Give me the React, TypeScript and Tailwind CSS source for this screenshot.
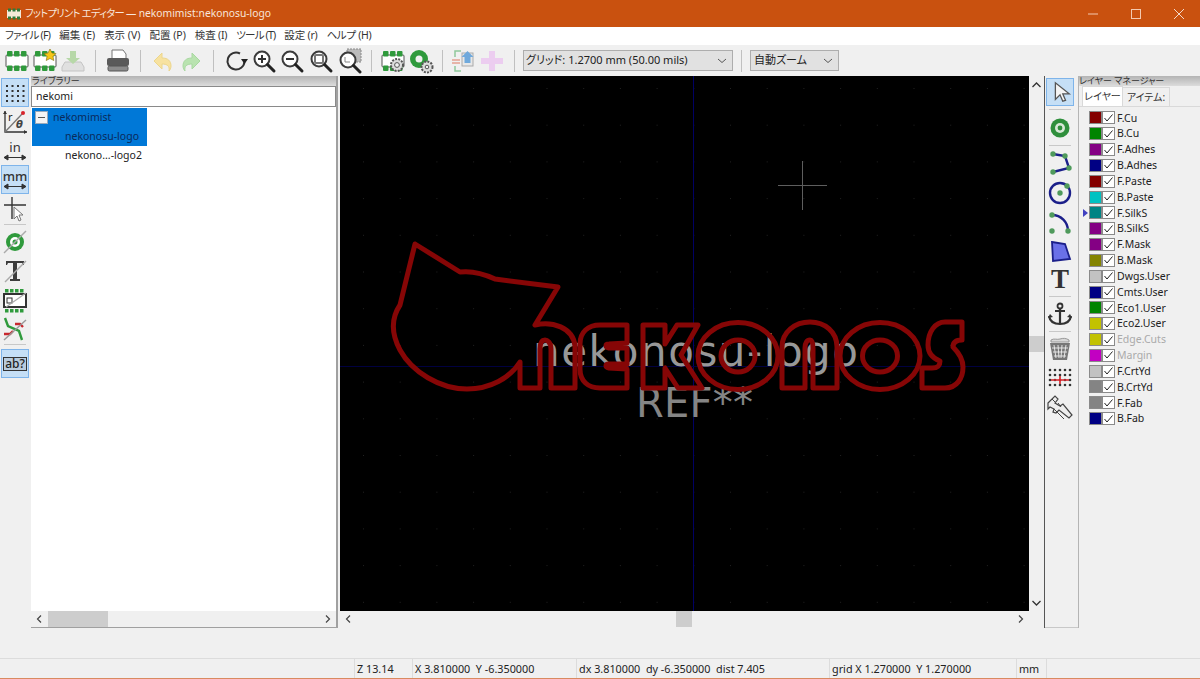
import React from "react";

const uiFont = "font-['Noto_Sans','Noto_Sans_CJK_JP',sans-serif] [font-feature-settings:'palt']";

const layers = [
  ["F.Cu", "#840000"],
  ["B.Cu", "#008400"],
  ["F.Adhes", "#840084"],
  ["B.Adhes", "#000084"],
  ["F.Paste", "#840000"],
  ["B.Paste", "#00c2c2"],
  ["F.SilkS", "#008484"],
  ["B.SilkS", "#840084"],
  ["F.Mask", "#840084"],
  ["B.Mask", "#848400"],
  ["Dwgs.User", "#c2c2c2"],
  ["Cmts.User", "#000084"],
  ["Eco1.User", "#008400"],
  ["Eco2.User", "#c2c200"],
  ["Edge.Cuts", "#c2c200"],
  ["Margin", "#c200c2"],
  ["F.CrtYd", "#c2c2c2"],
  ["B.CrtYd", "#848484"],
  ["F.Fab", "#848484"],
  ["B.Fab", "#000084"],
];

const menus = [
  ["ファイル (F)", "tracking-[-0.7px]"],
  ["編集 (E)", ""],
  ["表示 (V)", ""],
  ["配置 (P)", ""],
  ["検査 (I)", "tracking-[-0.2px]"],
  ["ツール (T)", "tracking-[-0.8px]"],
  ["設定 (r)", "tracking-[-0.2px]"],
  ["ヘルプ (H)", "tracking-[-0.3px]"],
];

function Ico({ children, size = 26 }: { children: React.ReactNode; size?: number }) {
  return (
    <svg width={size} height={size} viewBox="0 0 26 26" fill="none">
      {children}
    </svg>
  );
}

function Chip({ gear, star }: { gear?: boolean; star?: boolean }) {
  return (
    <Ico>
      <rect x="2" y="7" width="22" height="12" rx="1" fill="#fff" stroke="#555" strokeWidth="1" />
      {[3, 10, 17].map((x) => (
        <g key={x}>
          <rect x={x} y="3" width="5.5" height="5.5" rx="1" fill="#2f9a3c" />
          <rect x={x} y="17.5" width="5.5" height="5.5" rx="1" fill="#2f9a3c" />
        </g>
      ))}
      {star && <path d="M18 1l2 4 4 .5-3 3 .8 4-3.8-2-3.8 2 .8-4-3-3 4-.5z" fill="#f5c518" stroke="#7a6a10" strokeWidth=".6" />}
      {gear && (
        <g>
          <circle cx="17" cy="17" r="6" fill="#ddd" stroke="#555" strokeWidth="2" strokeDasharray="2 1.2" />
          <circle cx="17" cy="17" r="2.4" fill="#f0f0f0" stroke="#555" />
        </g>
      )}
    </Ico>
  );
}

function Magnifier({ children }: { children?: React.ReactNode }) {
  return (
    <Ico>
      <circle cx="11" cy="11" r="7.5" stroke="#3c3c3c" strokeWidth="2" fill="#fff" />
      <path d="M16.5 16.5L23 23" stroke="#222" strokeWidth="3" strokeLinecap="round" />
      {children}
    </Ico>
  );
}

function Sep({ mx = "mx-[8px]" }: { mx?: string }) {
  return <div className={`${mx} h-[22px] w-px shrink-0 bg-[#c0c0c0]`} />;
}

function TopBtn({ children, w = "w-[28px]" }: { children: React.ReactNode; w?: string }) {
  return <div className={`flex h-[29px] ${w} shrink-0 items-center justify-center`}>{children}</div>;
}

function Combo({ label, className }: { label: string; className: string }) {
  return (
    <div className={`flex h-[21px] shrink-0 items-center justify-between border border-[#adadad] bg-[#e1e1e1] pl-[2px] pr-[5px] text-[11px] text-[#222] ${className}`}>
      <span>{label}</span>
      <svg width="10" height="6" viewBox="0 0 10 6" fill="none">
        <path d="M1 1l4 3.5L9 1" stroke="#555" />
      </svg>
    </div>
  );
}

function TopToolbar() {
  return (
    <div className="flex h-[31px] items-center bg-[#f0f0f0] pl-[3px]">
      <TopBtn><Chip /></TopBtn>
      <TopBtn><Chip star /></TopBtn>
      <TopBtn>
        <Ico>
          <path d="M5 14h16l3 5v4H2v-4z" fill="#e0e0e0" stroke="#c4c4c4" />
          <path d="M10 3h6v7h4l-7 6-7-6h4z" fill="#b7d8a8" />
        </Ico>
      </TopBtn>
      <Sep />
      <TopBtn>
        <Ico>
          <path d="M7 2h11l3 4v6H7z" fill="#fff" stroke="#777" />
          <rect x="2" y="10" width="22" height="8" rx="2" fill="#5a5a5a" />
          <rect x="3" y="18" width="20" height="5" rx="1.5" fill="#8b8b8b" stroke="#555" />
        </Ico>
      </TopBtn>
      <Sep />
      <TopBtn>
        <Ico>
          <path d="M4 13l8-8v5c6 0 9 3 9 8 0 2-1 4-2 5 1-5-2-7-7-7v5z" fill="#f7e2a0" stroke="#ecd68c" />
        </Ico>
      </TopBtn>
      <TopBtn>
        <Ico>
          <path d="M22 13l-8-8v5c-6 0-9 3-9 8 0 2 1 4 2 5-1-5 2-7 7-7v5z" fill="#b9e3b0" stroke="#a8d8a0" />
        </Ico>
      </TopBtn>
      <Sep />
      <TopBtn>
        <Ico>
          <path d="M17 5.5A8.5 8.5 0 1 0 21.5 13.5" stroke="#333" strokeWidth="2" />
          <path d="M18 11h7l-3.5 5z" fill="#222" />
        </Ico>
      </TopBtn>
      <TopBtn><Magnifier><path d="M7 11h8M11 7v8" stroke="#333" strokeWidth="2" /></Magnifier></TopBtn>
      <TopBtn><Magnifier><path d="M7 11h8" stroke="#333" strokeWidth="2" /></Magnifier></TopBtn>
      <TopBtn w="w-[29px]"><Magnifier><rect x="7" y="7" width="8" height="8" rx="1" stroke="#777" strokeWidth="2" /></Magnifier></TopBtn>
      <TopBtn w="w-[29px]">
        <Ico>
          <rect x="10" y="1" width="14" height="13" fill="#bbb" stroke="#888" strokeDasharray="2 1" />
          <circle cx="11" cy="12" r="7.5" stroke="#3c3c3c" strokeWidth="2" fill="#fff" />
          <path d="M8 9v5h5" stroke="#888" />
          <path d="M16.5 17.5L23 24" stroke="#222" strokeWidth="3" strokeLinecap="round" />
        </Ico>
      </TopBtn>
      <Sep mx="mx-[7px]" />
      <TopBtn><Chip gear /></TopBtn>
      <TopBtn>
        <Ico>
          <circle cx="11" cy="11" r="9" fill="#2f9a3c" />
          <circle cx="11" cy="11" r="3.5" fill="#f0f0f0" />
          <circle cx="19" cy="19" r="5.5" fill="#ddd" stroke="#555" strokeWidth="2" strokeDasharray="2 1.2" />
          <circle cx="19" cy="19" r="1.8" fill="#f0f0f0" stroke="#555" />
        </Ico>
      </TopBtn>
      <Sep mx="mx-[7px]" />
      <TopBtn>
        <Ico>
          <path d="M10 3H4v6M10 23H4v-5" stroke="#8fc79a" strokeWidth="1.5" />
          <path d="M1 12h8M1 15h8" stroke="#e3a090" strokeWidth="1.5" />
          <rect x="11" y="5" width="11" height="13" fill="#e8e8e8" stroke="#aaa" />
          <path d="M16.5 3l6 6h-3v6h-6V9h-3z" fill="#6fa9dc" />
        </Ico>
      </TopBtn>
      <TopBtn>
        <Ico>
          <path d="M10 3h6v7h8v6h-8v7h-6v-7H2v-6h8z" fill="#eccdf0" />
        </Ico>
      </TopBtn>
      <Sep />
      <Combo label="グリッド: 1.2700 mm (50.00 mils)" className="w-[210px]" />
      <Sep />
      <Combo label="自動ズーム" className="w-[89px] pl-[3px]" />
    </div>
  );
}

function ToolBtn({ children, active, h = "h-[29px]" }: { children: React.ReactNode; active?: boolean; h?: string }) {
  return (
    <div className={`flex ${h} w-[28px] items-center justify-center ${active ? "border border-[#7eb4ea] bg-[#c5dff6]" : ""}`}>
      {children}
    </div>
  );
}

function ToolSep({ className }: { className: string }) {
  return <div className={`mx-[3px] h-px w-[22px] bg-[#c8c8c8] ${className}`} />;
}

function LeftTools() {
  return (
    <div className="flex w-[30px] shrink-0 flex-col pl-px pt-[2px]">
      <ToolBtn active>
        <Ico>
          {[5, 10, 15, 20].map((y) =>
            [4, 9.5, 15, 20.5].map((x) => <rect key={`${x}-${y}`} x={x} y={y} width="2" height="2" fill="#333" />)
          )}
        </Ico>
      </ToolBtn>
      <ToolBtn>
        <Ico>
          <path d="M3 2v21h22" stroke="#333" strokeWidth="1.3" />
          <path d="M3 23L20 5" stroke="#777" strokeWidth="1.3" />
          <circle cx="21" cy="4" r="2" fill="#d8232a" />
          <path d="M1 5l2-3 2 3M22 21l3 2-3 2" fill="#333" />
          <text x="6" y="12" fontSize="11" fill="#222" className="font-['Noto_Sans',sans-serif]">r</text>
          <text x="14" y="19" fontSize="10" fontStyle="italic" fontWeight="700" fill="#444" className="font-['DejaVu_Sans',sans-serif]">θ</text>
        </Ico>
      </ToolBtn>
      <ToolBtn>
        <div className="flex flex-col items-center">
          <span className="text-[13px] leading-[13px] text-[#333]">in</span>
          <svg width="24" height="7" viewBox="0 0 24 7">
            <path d="M1 3.5h22M1 3.5l4-2.5v5zM23 3.5l-4-2.5v5z" stroke="#333" fill="#333" />
          </svg>
        </div>
      </ToolBtn>
      <ToolBtn active>
        <div className="flex flex-col items-center">
          <span className="text-[13px] font-medium leading-[13px] text-[#333]">mm</span>
          <svg width="24" height="7" viewBox="0 0 24 7">
            <path d="M1 3.5h22M1 3.5l4-2.5v5zM23 3.5l-4-2.5v5z" stroke="#333" fill="#333" />
          </svg>
        </div>
      </ToolBtn>
      <ToolBtn>
        <Ico>
          <path d="M10 1v22M2 9h22" stroke="#333" strokeWidth="1.4" />
          <path d="M12 11v12l3-3 2 5 2-1-2-5h4z" fill="#fff" stroke="#777" />
        </Ico>
      </ToolBtn>
      <ToolSep className="mb-[2px] mt-px" />
      <ToolBtn>
        <Ico>
          <circle cx="13" cy="13" r="9" fill="#2f9a3c" />
          <circle cx="13" cy="13" r="5" fill="#fff" />
          <circle cx="13" cy="13" r="2.5" fill="#2f9a3c" />
          <path d="M2 24L24 2" stroke="#aaa" strokeWidth="1.4" />
        </Ico>
      </ToolBtn>
      <ToolBtn>
        <Ico>
          <path d="M4 3h18v4h-1l-1-2h-5v16h3v2H8v-2h3V5H6L5 7H4z" fill="#3c3c3c" />
          <path d="M3 24L24 3" stroke="#aaa" strokeWidth="1.4" />
        </Ico>
      </ToolBtn>
      <ToolBtn>
        <Ico>
          <rect x="2" y="7" width="22" height="13" fill="#fff" stroke="#333" strokeWidth="2" />
          <rect x="5" y="11" width="5" height="5" stroke="#333" />
          {[3, 8, 13, 18].map((x) => (
            <g key={x}>
              <rect x={x} y="2" width="3.5" height="3.5" fill="#2f9a3c" />
              <rect x={x} y="22" width="3.5" height="3.5" fill="#2f9a3c" />
            </g>
          ))}
          <path d="M4 20L24 6" stroke="#aaa" strokeWidth="1.2" />
        </Ico>
      </ToolBtn>
      <ToolBtn>
        <Ico>
          <path d="M3 2l3 8 11 5 3 9" stroke="#2f9a3c" strokeWidth="2.4" />
          <path d="M2 18h6l3-3M13 8h5l3 3" stroke="#c8282e" strokeWidth="2.4" />
          <path d="M2 24L24 4" stroke="#999" strokeWidth="1.4" />
        </Ico>
      </ToolBtn>
      <ToolSep className="mb-[4px] mt-px" />
      <ToolBtn active>
        <span className="border border-[#333] bg-[#b8cbdc] px-px text-[12px] font-medium leading-[12px] text-[#222]">ab?</span>
      </ToolBtn>
    </div>
  );
}

function HScroll({ thumbClass }: { thumbClass: string }) {
  return (
    <div className="flex h-[16px] shrink-0 items-center bg-[#f0f0f0]">
      <svg width="16" height="16" viewBox="0 0 16 16" fill="none" className="shrink-0">
        <path d="M10 4.5L6.5 8l3.5 3.5" stroke="#444" strokeWidth="1.2" />
      </svg>
      <div className="h-full flex-1">
        <div className={`h-full bg-[#cdcdcd] ${thumbClass}`} />
      </div>
      <svg width="16" height="16" viewBox="0 0 16 16" fill="none" className="shrink-0">
        <path d="M6 4.5L9.5 8 6 11.5" stroke="#444" strokeWidth="1.2" />
      </svg>
    </div>
  );
}

function LibraryPanel() {
  return (
    <div className="flex w-[308px] shrink-0 flex-col border-r-2 border-[#a0a0a0] pl-px">
      <div className="h-[10px] bg-gradient-to-b from-[#b4b4b4] to-[#dcdcdc] pl-px text-[9px] leading-[9px] text-[#333]">ライブラリー</div>
      <div className="h-[21px] border border-[#8a8a8a] bg-white pl-[4px] text-[10.5px] leading-[19px] text-[#222]">nekomi</div>
      <div className="flex flex-1 flex-col overflow-hidden bg-white text-[10.5px] leading-[19px] text-[#222]">
        <div className="ml-px mt-px w-[115px] bg-[#0078d7] text-[#0a2a5c]">
          <div className="flex h-[19px] items-center">
            <span className="ml-[3px] flex h-[13px] w-[13px] items-center justify-center border border-[#9ab] bg-[#f4f4f4]">
              <span className="h-px w-[7px] bg-[#555]" />
            </span>
            <span className="ml-[5px]">nekomimist</span>
          </div>
          <div className="h-[19px] pl-[33px]">nekonosu-logo</div>
        </div>
        <div className="h-[19px] pl-[34px]">nekono...-logo2</div>
      </div>
      <div className="h-[16px] shrink-0">
        <HScroll thumbClass="ml-[1px] w-[60px]" />
      </div>
      <div className="h-px bg-[#a0a0a0]" />
    </div>
  );
}

function Canvas() {
  const dots = [];
  for (let y = 0; y < 15; y++) {
    for (let x = 0; x < 19; x++) {
      dots.push(<rect key={`${x}-${y}`} x={363 + x * 36.7} y={88 + y * 36.7} width="1" height="1" fill="#222" />);
    }
  }
  return (
    <div className="relative h-[535px] bg-black">
      <svg className="absolute inset-0" width="689" height="535" viewBox="340 76 689 535" fill="none">
        {dots}
        <path d="M693.5 76v535" stroke="#000064" />
        <path d="M340 366.5h689" stroke="#000040" />
        <path d="M778 185.5h49M802.5 161v49" stroke="#5e5e5e" />
        <text x="533" y="366" textLength="325" fontSize="42" fill="#989898" className="font-['DejaVu_Sans',sans-serif]">nekonosu-logo</text>
        <text x="636" y="417" textLength="117" fontSize="40" fill="#858585" className="font-['DejaVu_Sans',sans-serif]">REF**</text>
        <g stroke="#860606" strokeWidth="5" strokeLinejoin="round">
          <path d="M415 244L460 272C468 271 478 271 495 279L558 287L535 325C552 321 573 327 575 346V388H551V349C551 342 547 340 545 340C542 340 540 343 540 349V388H520V362C510 378 490 389 467 389C440 389 412 372 400 350C392 335 390 320 400 305Z" />
          <path d="M627 325H600C588 325 580 332 580 344V369C580 381 588 388 600 388H627V369L609 368C605 367 605 364 609 364L627 364V348L609 348C605 347 605 344 609 344L627 343Z" />
          <path d="M643 325H665V344L677 325H698L681 355L702 388H678L665 368V388H643Z" />
          <ellipse cx="738" cy="356" rx="40" ry="33.5" />
          <ellipse cx="738" cy="356" rx="17" ry="16" />
          <path d="M782 388V347C782 332 795 322 810 322C825 322 837 332 837 347V388H813V348C813 342 812 340 810 340C807 340 805 343 805 348V388Z" />
          <ellipse cx="880" cy="356" rx="40" ry="33.5" />
          <ellipse cx="880" cy="356" rx="17.5" ry="16" />
          <path d="M962 322H945C935 322 928 332 928 345C928 352 932 358 940 361C940 366 938 368 932 368H922V388H945C957 388 963 378 963 367C963 358 958 352 953 347C953 342 956 340 962 340Z" />
        </g>
      </svg>
    </div>
  );
}

function VScroll() {
  return (
    <div className="flex w-[16px] shrink-0 flex-col items-center border-r border-[#555]">
      <svg width="15" height="16" viewBox="0 0 15 16" fill="none" className="mt-[1px] shrink-0">
        <path d="M3.5 10l4-4 4 4" stroke="#333" strokeWidth="1.3" />
      </svg>
      <div className="mt-[243px] h-[16px] w-full bg-[#cdcdcd]" />
      <svg width="15" height="16" viewBox="0 0 15 16" fill="none" className="mt-[243px] shrink-0">
        <path d="M3.5 6l4 4 4-4" stroke="#333" strokeWidth="1.3" />
      </svg>
    </div>
  );
}

function Dot({ cx, cy }: { cx: number; cy: number }) {
  return <circle cx={cx} cy={cy} r="2.7" fill="#4f9a5c" />;
}

function RightTools() {
  return (
    <div className="flex w-[33px] shrink-0 flex-col border-b border-[#c8c8c8] pl-px pt-[2px]">
      <ToolBtn active h="h-[28px]">
        <Ico size={24}>
          <path d="M8 3v18l5-5 3 7 3-1-3-7h7z" fill="#f4f4f4" stroke="#555" strokeWidth="1.4" />
        </Ico>
      </ToolBtn>
      <ToolSep className="my-[3px]" />
      <ToolBtn>
        <Ico>
          <circle cx="13" cy="13" r="9.5" fill="#2f8f3c" />
          <circle cx="13" cy="13" r="5" fill="#d8e8d8" />
          <circle cx="13" cy="13" r="2.4" fill="#2f8f3c" />
        </Ico>
      </ToolBtn>
      <ToolSep className="mb-[2px] mt-[3px]" />
      <ToolBtn>
        <Ico>
          <path d="M6 4L18 6L22 18L6 22" stroke="#1b1f8a" strokeWidth="2.4" />
          <Dot cx={6} cy={4} />
          <Dot cx={18} cy={6} />
          <Dot cx={22} cy={18} />
          <Dot cx={6} cy={22} />
        </Ico>
      </ToolBtn>
      <ToolBtn h="h-[31px]">
        <Ico>
          <circle cx="13" cy="13" r="10" stroke="#1b1f8a" strokeWidth="2.4" />
          <Dot cx={13} cy={13} />
          <Dot cx={20} cy={6} />
        </Ico>
      </ToolBtn>
      <ToolBtn>
        <Ico>
          <path d="M5 5C14 5 21 12 21 21" stroke="#1b1f8a" strokeWidth="2.4" />
          <Dot cx={5} cy={5} />
          <Dot cx={21} cy={21} />
          <Dot cx={5} cy={21} />
        </Ico>
      </ToolBtn>
      <ToolBtn h="h-[28px]">
        <Ico>
          <path d="M5 4L18 6L23 21L6 23Z" fill="#6a70e8" stroke="#1b1f8a" strokeWidth="1.8" />
        </Ico>
      </ToolBtn>
      <ToolBtn h="h-[28px]">
        <span className="font-['Liberation_Serif',serif] text-[27px] font-bold leading-[28px] text-[#333]">T</span>
      </ToolBtn>
      <ToolSep className="mb-[2px] mt-[3px]" />
      <ToolBtn>
        <Ico>
          <circle cx="13" cy="5" r="2.5" stroke="#333" strokeWidth="1.8" />
          <path d="M13 7v16M8 10h10M2 15c1 6 6 8 11 8s10-2 11-8" stroke="#333" strokeWidth="2.2" />
          <path d="M1 17l2-4 3 3zM25 17l-2-4-3 3z" fill="#333" />
        </Ico>
      </ToolBtn>
      <ToolSep className="mb-[2px] mt-[3px]" />
      <ToolBtn>
        <Ico>
          <path d="M4 4c3-2 6 0 9-1s6-1 9 1v2H4z" fill="#d8d8d8" stroke="#999" />
          <path d="M3 7h20l-3 17H6z" fill="#777" />
          <path d="M7 9l2 13M11 9l1 13M15 9l-1 13M19 9l-2 13M5 12h16M6 16h14M7 20h12" stroke="#eee" strokeWidth=".9" />
        </Ico>
      </ToolBtn>
      <ToolBtn>
        <Ico>
          {[5, 10, 15, 20].map((y) =>
            [3, 8, 13, 18, 23].map((x) => <circle key={`${x}-${y}`} cx={x} cy={y} r="1.3" fill="#333" />)
          )}
          <path d="M4 15h18M13 11v8" stroke="#d8232a" strokeWidth="1.6" />
        </Ico>
      </ToolBtn>
      <ToolBtn>
        <Ico>
          <path d="M1 9l7-7 3 3-3 4 5 3 3-2 9 11-3 3-10-8-3 3-3-1 1-3-4-2-2 2z" fill="#eee" stroke="#444" strokeWidth="1.2" />
          <path d="M7 15l10 10M11 9l3 4M5 5l3 3" stroke="#444" />
        </Ico>
      </ToolBtn>
    </div>
  );
}

function LayerRow({ name, color, active }: { name: string; color: string; active: boolean }) {
  const muted = name === "Edge.Cuts" || name === "Margin";
  return (
    <div className="relative flex h-[15.84px] items-center pl-[10px]">
      {active && <span className="absolute left-[4px] h-0 w-0 border-y-[4px] border-l-[5px] border-y-transparent border-l-[#4040c0]" />}
      <span className="h-[13px] w-[13px] border border-[#8a8a8a]" style={{ backgroundColor: color }} />
      <span className="flex h-[13px] w-[13px] items-center justify-center border border-[#8a8a8a] bg-white">
        <svg width="9" height="8" viewBox="0 0 9 8" fill="none">
          <path d="M.5 4l2.5 3L8.5.5" stroke="#222" />
        </svg>
      </span>
      <span className={`ml-[2px] text-[10.5px] leading-none ${muted ? "text-[#aaa]" : "text-[#222]"}`}>{name}</span>
    </div>
  );
}

function LayerPanel() {
  return (
    <div className="flex flex-1 flex-col border-l border-[#b4b4b4]">
      <div className="h-[10px] whitespace-nowrap bg-gradient-to-b from-[#b4b4b4] to-[#dcdcdc] text-[9px] leading-[9px] text-[#333]">レイヤー マネージャー</div>
      <div className="mt-px flex h-[20px] items-end border-b border-[#d9d9d9] pl-[3px] text-[10px] text-[#333]">
        <div className="flex h-[20px] w-[41px] items-center justify-center whitespace-nowrap border border-b-0 border-[#d9d9d9] bg-white">レイヤー</div>
        <div className="flex h-[19px] w-[47px] items-center justify-center whitespace-nowrap border-r border-t border-[#d9d9d9] bg-[#f0f0f0]">アイテム:</div>
      </div>
      <div className="pt-[3px]">
        {layers.map(([name, color]) => (
          <LayerRow key={name} name={name} color={color} active={name === "F.SilkS"} />
        ))}
      </div>
    </div>
  );
}

function StatusBar() {
  const cells = [
    ["w-[58px] pl-[2px]", "Z 13.14"],
    ["w-[164px] pl-[2px]", "X 3.810000  Y -6.350000"],
    ["w-[253px] pl-[2px]", "dx 3.810000  dy -6.350000  dist 7.405"],
    ["w-[187px] pl-[2px]", "grid X 1.270000  Y 1.270000"],
    ["w-[30px] pl-[2px]", "mm"],
  ];
  return (
    <div className="flex h-[20px] items-center border-t border-[#dcdcdc] pl-[354px] text-[10.8px] text-[#222]">
      {cells.map(([w, text]) => (
        <div key={text} className={`h-full whitespace-pre border-l border-[#dcdcdc] leading-[19px] ${w}`}>
          {text}
        </div>
      ))}
      <div className="h-full border-l border-[#dcdcdc]" />
    </div>
  );
}

export default function App() {
  return (
    <div className={`flex h-[679px] w-[1200px] flex-col overflow-hidden bg-[#f0f0f0] ${uiFont}`}>
      <div className="flex h-[27px] shrink-0 items-center bg-[#c9510f] text-[10.3px] text-[#f8e6da]">
        <svg width="14" height="12" viewBox="0 0 14 12" className="ml-[7px] mr-[4px]">
          <rect x="0" y="2" width="14" height="8" fill="#f3ead8" />
          <path d="M1 2h3M5.5 2h3M10 2h3M1 10h3M5.5 10h3M10 10h3" stroke="#2f7a3a" strokeWidth="3" />
        </svg>
        <span className="tracking-[-0.7px]">フットプリント エディター —</span>
        <span className="ml-[3px]">nekomimist:nekonosu-logo</span>
        <div className="ml-auto flex items-center gap-[33px] pr-[16px]">
          <svg width="10" height="10" viewBox="0 0 10 10"><path d="M0 5h10" stroke="#f3c9b0" /></svg>
          <svg width="10" height="10" viewBox="0 0 10 10"><rect x=".5" y=".5" width="9" height="9" fill="none" stroke="#f3c9b0" /></svg>
          <svg width="10" height="10" viewBox="0 0 10 10"><path d="M0 0l10 10M10 0L0 10" stroke="#f3d9ca" /></svg>
        </div>
      </div>
      <div className="flex h-[18px] shrink-0 items-center gap-[9px] bg-white pl-[5px] text-[10.5px] text-[#333]">
        {menus.map(([m, t]) => (
          <span key={m} className={t}>{m}</span>
        ))}
      </div>
      <TopToolbar />
      <div className="flex h-[552px] shrink-0">
        <LeftTools />
        <LibraryPanel />
        <div className="w-[2px] shrink-0" />
        <div className="flex w-[689px] shrink-0 flex-col">
          <Canvas />
          <HScroll thumbClass="ml-[320px] w-[16px]" />
        </div>
        <VScroll />
        <RightTools />
        <LayerPanel />
      </div>
      <div className="flex-1" />
      <StatusBar />
      <div className="h-px shrink-0 bg-[#d98a60]" />
    </div>
  );
}
